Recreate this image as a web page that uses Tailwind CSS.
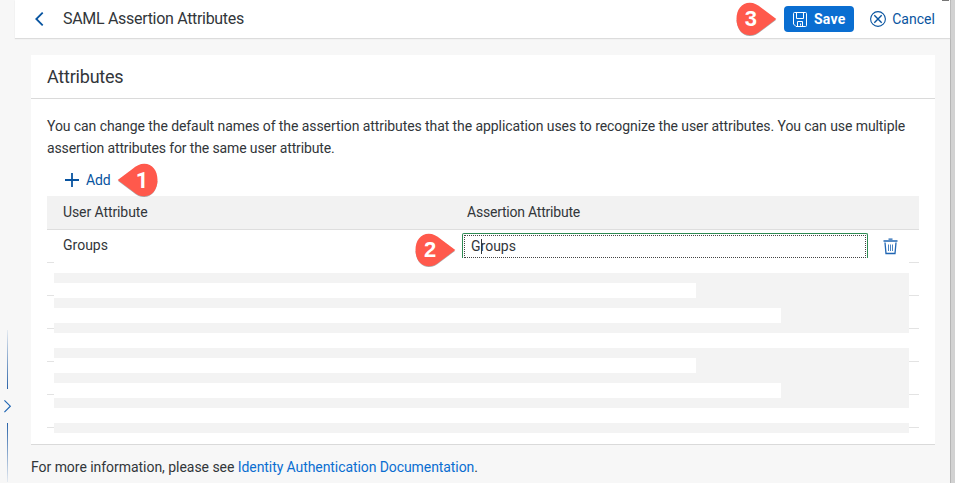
<!DOCTYPE html>
<html lang="en">
<head>
<meta charset="utf-8">
<title>SAML Assertion Attributes</title>
<script src="https://cdn.jsdelivr.net/npm/@tailwindcss/browser@4"></script>
</head>
<body class="relative flex h-[483px] w-[955px] overflow-hidden bg-[#f7f7f7] font-[Roboto,'Liberation_Sans',sans-serif] text-[14px] text-[#32363a]">
  <!-- Collapsed side navigation -->
  <aside class="flex w-[15px] shrink-0 flex-col pt-[330px]">
    <div class="ml-[7px] h-[59px] w-px bg-[linear-gradient(to_bottom,#e6ebf1,#2a63a8)]"></div>
    <svg class="my-[10px] ml-[4px] h-[14px] w-[8px] shrink-0" viewBox="0 0 8 14" fill="none" stroke="#1f65b3" stroke-width="1.2"><path d="M.4 1.300 6.300 7.200.4 13.100"/></svg>
    <div class="ml-[7px] h-[59px] w-px bg-[linear-gradient(to_bottom,#2a63a8,#e6ebf1)]"></div>
  </aside>

  <main class="flex w-[935px] shrink-0 flex-col">
    <header class="relative flex h-[38px] shrink-0 items-center bg-white pr-[15px] pl-[20px] shadow-[0_1px_1px_#dcdcdc]">
      <svg class="h-[14px] w-[9px] shrink-0" viewBox="0 0 9 14" fill="none" stroke="#0854a0" stroke-width="1.8"><path d="M7.700.6 1.300 7l6.400 6.400"/></svg>
      <h1 class="ml-[19px] text-[16px] leading-[38px] tracking-[-0.31px] whitespace-nowrap">SAML Assertion Attributes</h1>
      <div class="ml-auto flex items-center">
        <svg class="mr-[7px] h-[36px] w-[42px]" viewBox="0 0 42 36">
          <path d="M41.300 18.800 26.300 30C23 33 19 35 14.800 35 7 35 2 28 1.500 19Z" fill="#777" opacity=".6"/>
          <path d="M41.300 18 26.300 6.800C23 3.800 19 1.800 14.800 1.800 6.500 1.800 1.500 9 1.500 18s5 16.200 13.300 16.200C19 34.200 23 32.200 26.300 29.200Z" fill="#ff594c"/>
          <text x="15.800" y="25.300" text-anchor="middle" font-family="Liberation Sans" font-size="22" font-weight="700" fill="#fff">3</text>
        </svg>
        <button class="flex h-[26px] w-[70px] items-center rounded-[4px] bg-[#0a6ed1] pl-[9px] font-bold text-white">
          <svg class="mr-[7px] h-[15px] w-[14px]" viewBox="0 0 14 15" fill="none" stroke="#fff"><path d="M.5 1.500Q.5.5 1.500.5h11q1 0 1 1v12q0 1-1 1H3L.5 12ZM3.500.5v6h7v-6M4.500 14.500v-5h5v5M7.500 11.500v2"/></svg>
          <span class="tracking-[.25px]">Save</span>
        </button>
        <button class="ml-[16px] flex items-center text-[#0854a0]">
          <svg class="mr-[6px] h-[16px] w-[16px]" viewBox="0 0 16 16" fill="none" stroke="#0854a0" stroke-width="1.100"><circle cx="8" cy="8" r="7.400"/><path d="m4.300 4.300 7.400 7.400m0-7.400-7.400 7.400" stroke-width="1.400"/></svg>
          <span class="w-[43px] whitespace-nowrap">Cancel</span>
        </button>
      </div>
      <div class="absolute top-0 right-[1px] h-px w-[7px] bg-[#777]"></div>
    </header>

    <section class="mt-[17px] ml-[16px] flex h-[389px] w-[904px] shrink-0 flex-col bg-white shadow-[0_1px_0_#dadada]">
      <h2 class="h-[44px] shrink-0 border-b border-[#dadada] pl-[16px] text-[18px] leading-[44px] tracking-[-0.22px]">Attributes</h2>
      <div class="flex flex-col px-[16px] pt-[16px]">
        <p class="h-[44px] leading-[22px] whitespace-nowrap"><span class="tracking-[-0.078px]">You can change the default names of the assertion attributes that the application uses to recognize the user attributes. You can use multiple</span><br><span class="tracking-[-0.13px]">assertion attributes for the same user attribute.</span></p>
        <div class="flex h-[37px] items-center pt-[5px] pl-[18px] text-[#0854a0]">
          <svg class="mr-[7px] h-[14px] w-[14px]" viewBox="0 0 14 14" stroke="#0854a0" stroke-width="1.800"><path d="M0 7h14M7 0v14"/></svg>
          <span class="w-[26px] tracking-[-.1px]">Add</span>
          <svg class="relative ml-[5px] h-[36px] w-[42px]" viewBox="0 0 42 36">
            <path d="M.7 18.800 15.700 30C19 33 23 35 27.200 35 35 35 40 28 40.500 19Z" fill="#777" opacity=".6"/>
            <path d="M.7 18 15.700 6.800C19 3.800 23 1.800 27.200 1.800 35.500 1.800 40.500 9 40.500 18s-5 16.200-13.300 16.200C23 34.200 19 32.200 15.700 29.200Z" fill="#ff594c"/>
            <text x="25" y="25.800" text-anchor="middle" font-family="Roboto" font-size="22" font-weight="700" fill="#fff">1</text>
          </svg>
        </div>
        <div class="grid h-[34px] grid-cols-[404px_1fr] border-b border-[#dedede] bg-[#f2f2f2] pl-[16px] leading-[32px]">
          <div class="tracking-[-0.09px]">User Attribute</div><div class="tracking-[-0.22px]">Assertion Attribute</div>
        </div>
        <div class="relative z-10 grid h-[28px] grid-cols-[351px_41px_7px_406px_15px_15px] pl-[16px]">
          <div class="leading-[31px]">Groups</div>
          <svg class="mt-[2px] h-[36px] w-[42px]" viewBox="0 0 42 36">
            <path d="M41.300 18.800 26.300 30C23 33 19 35 14.800 35 7 35 2 28 1.500 19Z" fill="#777" opacity=".6"/>
            <path d="M41.300 18 26.300 6.800C23 3.800 19 1.800 14.800 1.800 6.500 1.800 1.500 9 1.500 18s5 16.200 13.300 16.200C19 34.200 23 32.200 26.300 29.200Z" fill="#ff594c"/>
            <text x="16.200" y="25.300" text-anchor="middle" font-family="Liberation Sans" font-size="22" font-weight="700" fill="#fff">2</text>
          </svg>
          <div></div>
          <div class="mt-[3px] h-[25px] rounded-t-[2px] border border-b-0 border-[#2f8b53] p-px pb-0">
            <div class="relative h-[23px] border border-dotted border-[#444] pl-[6px] leading-[21px]"><span>Groups</span><i class="absolute top-[3px] left-[16px] h-[15px] w-px bg-[#32363a]"></i></div>
          </div>
          <div></div>
          <svg class="mt-[8px] h-[17px] w-[15px]" viewBox="0 0 15 17" fill="none" stroke="#1f65b3"><path d="M.5 3h14M5.500 1.200h4M2 4.500l1 11h9l1-11" stroke-width="1.300"/><path d="M5.500 6.500v6.500M7.500 6.500v6.500M9.500 6.500v6.500" stroke-opacity=".8"/></svg>
        </div>
        <!-- Loading placeholder rows over the table's row lines -->
        <div class="h-[185px] bg-[repeating-linear-gradient(to_bottom,transparent_0_4px,#e3e3e3_4px_5px,transparent_5px_33px)] bg-size-[100%_174px] bg-no-repeat pr-[10px] pl-[7px]">
          <div class="flex h-[185px] flex-col gap-[15px] bg-white pt-[15px]">
            <div class="flex h-[60px] flex-col gap-[10px] bg-[#f3f3f3] py-[10px]"><div class="h-[15px] w-[642px] bg-white"></div><div class="h-[15px] w-[727px] bg-white"></div></div>
            <div class="flex h-[60px] flex-col gap-[10px] bg-[#f3f3f3] py-[10px]"><div class="h-[15px] w-[642px] bg-white"></div><div class="h-[15px] w-[727px] bg-white"></div></div>
            <div class="h-[10px] bg-[#f3f3f3]"></div>
          </div>
        </div>
      </div>
    </section>
    <footer class="pt-[13px] pl-[16px] leading-[20px] tracking-[-0.07px] whitespace-nowrap"><span class="tracking-[-0.04px]">For more information, please see </span><a class="tracking-[-0.08px] text-[#0a6ed1]">Identity Authentication Documentation</a>.</footer>
  </main>
  <div class="w-[5px] shrink-0 border-l border-[#b5b5b5] bg-[#d2d2d2]"></div>
</body>
</html>
